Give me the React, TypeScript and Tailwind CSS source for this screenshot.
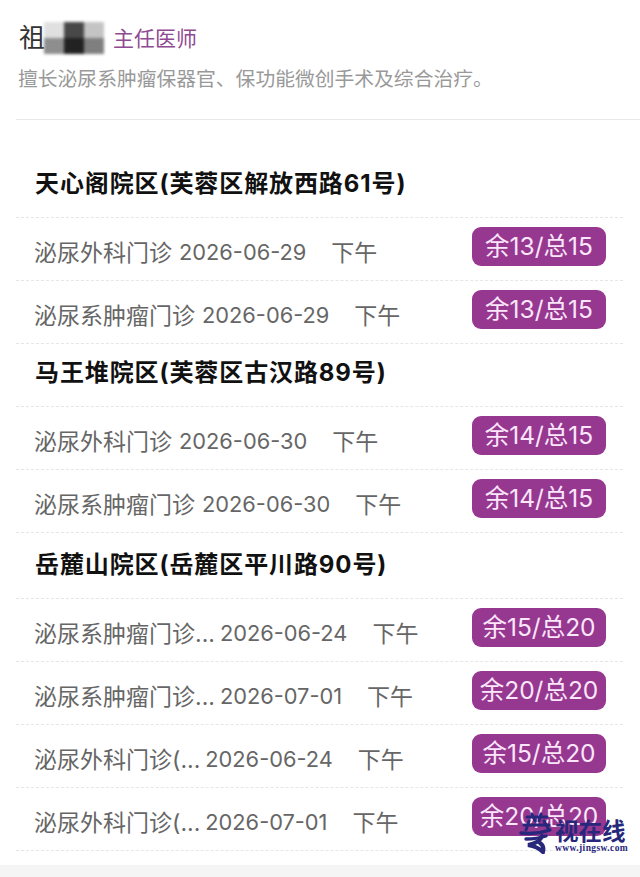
import React from 'react';

interface Slot {
  name: string;
  date: string;
  left: string;
}

interface Campus {
  title: string;
  className: string;
  slots: Slot[];
}

const campuses: Campus[] = [
  {
    title: '天心阁院区(芙蓉区解放西路61号)',
    className: 'mt-[35px]',
    slots: [
      { name: '泌尿外科门诊', date: '2026-06-29', left: '余13/总15' },
      { name: '泌尿系肿瘤门诊', date: '2026-06-29', left: '余13/总15' },
    ],
  },
  {
    title: '马王堆院区(芙蓉区古汉路89号)',
    className: '',
    slots: [
      { name: '泌尿外科门诊', date: '2026-06-30', left: '余14/总15' },
      { name: '泌尿系肿瘤门诊', date: '2026-06-30', left: '余14/总15' },
    ],
  },
  {
    title: '岳麓山院区(岳麓区平川路90号)',
    className: 'mt-[3px]',
    slots: [
      { name: '泌尿系肿瘤门诊...', date: '2026-06-24', left: '余15/总20' },
      { name: '泌尿系肿瘤门诊...', date: '2026-07-01', left: '余20/总20' },
      { name: '泌尿外科门诊(...', date: '2026-06-24', left: '余15/总20' },
      { name: '泌尿外科门诊(...', date: '2026-07-01', left: '余20/总20' },
    ],
  },
];

const SlotRow: React.FC<{ slot: Slot }> = ({ slot }) => (
  <div className="flex h-[63px] items-start justify-between border-b border-dashed border-[#e6e6e6] pl-[18px] pr-[17px]">
    <div className="mt-[17px] flex h-[36px] items-center text-[23px] leading-none text-[#666666]">
      <span>{slot.name}</span>
      <span className={slot.name.endsWith('...') ? 'ml-[5px] text-[21.8px]' : 'ml-[7px] text-[21.8px]'}>{slot.date}</span>
      <span className="ml-[25px]">下午</span>
    </div>
    <div className="mt-[9px] flex h-[39px] w-[134px] items-center justify-center rounded-[9px] bg-[#96388f] text-[24.5px] leading-none text-[#fbe6fb]">
      {slot.left}
    </div>
  </div>
);

const Watermark = () => (
  <div className="absolute left-[518px] top-[812px] flex items-end">
    <svg width="36" height="42" viewBox="0 0 36 42" fill="none" stroke="#27277c" strokeLinecap="round">
      <path d="M9 5h20M14 2l3 7M23 2l-2 7M6 13h25M11 9l-3 9M26 9l5 9" strokeWidth="3" />
      <path d="M3 21c9 1 20 0 29-3M8 27c7 0 14-1 20-3" strokeWidth="3.4" />
      <path d="M24 24c-2 6-8 8-14 9 6 1 11 3 15 7 1-4 0-7-3-9" strokeWidth="4" />
    </svg>
    <div className="mb-[1px] ml-[1px] flex flex-col items-start font-['Liberation_Serif','Noto_Sans_CJK_SC',serif] font-bold text-[#27277c]">
      <span className="text-[23.5px] leading-[23px]">视在线</span>
      <span className="text-[9.5px] leading-[9px] tracking-[0.4px]">www.jingsw.com</span>
    </div>
  </div>
);

export default function App() {
  return (
    <div className="relative h-[877px] w-[640px] overflow-hidden bg-white font-['Inter','Noto_Sans_CJK_SC',sans-serif]">
      <div className="ml-[16px]">
        <div className="h-[120px] border-b border-[#e8e8e8] pt-[20px]">
          <div className="flex h-[36px] items-center pl-[3px]">
            <span className="text-[26px] leading-none text-[#333333]">祖</span>
            <div className="ml-[-1px] grid h-[32px] w-[60px] grid-cols-3 grid-rows-2 blur-[1.5px]">
              <div className="bg-[#e0e0e0]" />
              <div className="bg-[#484848]" />
              <div className="bg-[#c4c4c4]" />
              <div className="bg-[#8e8e8e]" />
              <div className="bg-[#222222]" />
              <div className="bg-[#7f7f7f]" />
            </div>
            <span className="ml-[9px] text-[21px] leading-none text-[#8f4a92]">主任医师</span>
          </div>
          <p className="mt-[10px] pl-[2px] text-[19.8px] leading-[26px] text-[#999999]">
            擅长泌尿系肿瘤保器官、保功能微创手术及综合治疗。
          </p>
        </div>
        <div className="w-[607px]">
          {campuses.map((campus) => (
            <section key={campus.title} className={campus.className}>
              <h2 className="flex h-[63px] items-center border-b border-dashed border-[#e6e6e6] pb-[4px] pl-[19px] text-[24px] font-bold leading-none tracking-[0.9px] text-[#111111]">
                {campus.title}
              </h2>
              {campus.slots.map((slot, i) => (
                <SlotRow key={i} slot={slot} />
              ))}
            </section>
          ))}
        </div>
      </div>
      <div className="absolute bottom-0 left-0 h-[12px] w-full bg-[#f5f5f5]" />
      <Watermark />
    </div>
  );
}
